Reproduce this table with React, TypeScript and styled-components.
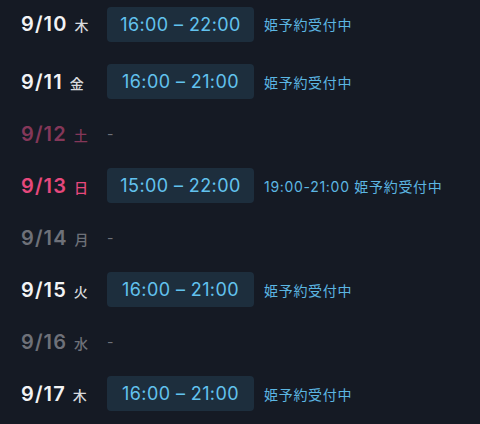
import React from "react";
import styled, { createGlobalStyle } from "styled-components";

const Global = createGlobalStyle`
  html, body { margin: 0; padding: 0; background: #151a24; }
  body { font-family: "Inter", "Noto Sans CJK JP", sans-serif; }
`;

type Kind = "normal" | "sat" | "sun" | "off";

const dateColors: Record<Kind, string> = {
  normal: "#f2f3f5",
  sat: "#843759",
  sun: "#e6487c",
  off: "#6e7179",
};
const dowColors: Record<Kind, string> = {
  normal: "#d8dade",
  sat: "#843759",
  sun: "#e6487c",
  off: "#6e7179",
};

const Page = styled.div`
  width: 480px;
  height: 424px;
  overflow: hidden;
  background: #151a24;
`;

const List = styled.div`
  display: flex;
  flex-direction: column;
  padding-left: 21px;
`;

const Row = styled.div<{ $first?: boolean }>`
  display: grid;
  grid-template-columns: 86px auto;
  align-items: center;
  height: ${(p) => (p.$first ? 48 : 52)}px;
  margin-bottom: ${(p) => (p.$first ? 7.5 : 0)}px;
`;

const DateCell = styled.div`
  display: flex;
  align-items: baseline;
  gap: 7px;
`;

const DateNum = styled.span<{ $kind: Kind }>`
  font-family: "Inter", sans-serif;
  font-weight: 600;
  font-size: 20px;
  letter-spacing: 1.1px;
  color: ${(p) => dateColors[p.$kind]};
`;

const Dow = styled.span<{ $kind: Kind }>`
  font-family: "Noto Sans CJK JP", sans-serif;
  font-size: 14px;
  font-weight: 500;
  color: ${(p) => dowColors[p.$kind]};
`;

const Content = styled.div`
  display: flex;
  align-items: center;
  gap: 10px;
`;

const Badge = styled.div`
  height: 35px;
  width: 147px;
  box-sizing: border-box;
  display: flex;
  align-items: center;
  justify-content: center;
  background: #1d2e3d;
  border-radius: 4px;
  color: #62c2ee;
  font-family: "Inter", sans-serif;
  font-size: 18px;
  font-weight: 400;
  letter-spacing: 0.4px;
`;

const Note = styled.span`
  font-family: "Inter", "Noto Sans CJK JP", sans-serif;
  font-size: 14px;
  color: #5cb6e2;
  letter-spacing: 0.7px;
`;

const Dash = styled.span`
  color: #6e7179;
  font-family: "Inter", sans-serif;
  font-size: 14px;
`;

type Day = { date: string; dow: string; kind: Kind; time?: string; note?: string };

const days: Day[] = [
  { date: "9/10", dow: "木", kind: "normal", time: "16:00 – 22:00", note: "姫予約受付中" },
  { date: "9/11", dow: "金", kind: "normal", time: "16:00 – 21:00", note: "姫予約受付中" },
  { date: "9/12", dow: "土", kind: "sat" },
  { date: "9/13", dow: "日", kind: "sun", time: "15:00 – 22:00", note: "19:00-21:00 姫予約受付中" },
  { date: "9/14", dow: "月", kind: "off" },
  { date: "9/15", dow: "火", kind: "normal", time: "16:00 – 21:00", note: "姫予約受付中" },
  { date: "9/16", dow: "水", kind: "off" },
  { date: "9/17", dow: "木", kind: "normal", time: "16:00 – 21:00", note: "姫予約受付中" },
];

export default function App() {
  return (
    <Page>
      <Global />
      <List>
        {days.map((d, i) => (
          <Row key={d.date} $first={i === 0}>
            <DateCell>
              <DateNum $kind={d.kind}>{d.date}</DateNum>
              <Dow $kind={d.kind}>{d.dow}</Dow>
            </DateCell>
            <Content>
              {d.time ? (
                <>
                  <Badge>{d.time}</Badge>
                  <Note>{d.note}</Note>
                </>
              ) : (
                <Dash>-</Dash>
              )}
            </Content>
          </Row>
        ))}
      </List>
    </Page>
  );
}
